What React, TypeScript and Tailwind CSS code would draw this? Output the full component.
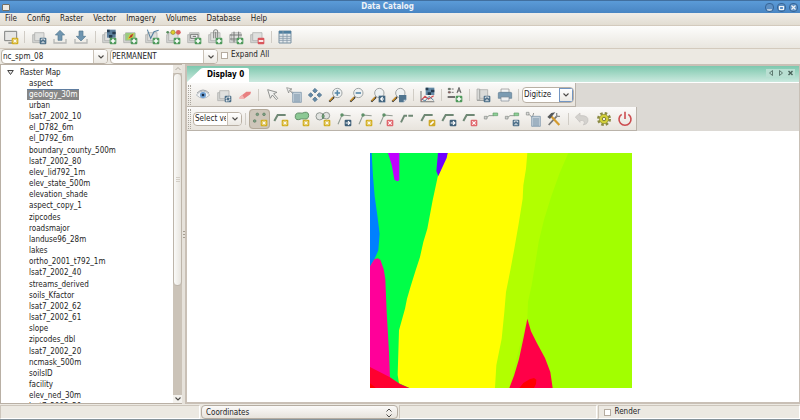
import { Fragment, type ReactNode } from "react";

const menus = ["File", "Config", "Raster", "Vector", "Imagery", "Volumes", "Database", "Help"];

const maps = [
  "aspect",
  "geology_30m",
  "urban",
  "lsat7_2002_10",
  "el_D782_6m",
  "el_D792_6m",
  "boundary_county_500m",
  "lsat7_2002_80",
  "elev_lid792_1m",
  "elev_state_500m",
  "elevation_shade",
  "aspect_copy_1",
  "zipcodes",
  "roadsmajor",
  "landuse96_28m",
  "lakes",
  "ortho_2001_t792_1m",
  "lsat7_2002_40",
  "streams_derived",
  "soils_Kfactor",
  "lsat7_2002_62",
  "lsat7_2002_61",
  "slope",
  "zipcodes_dbl",
  "lsat7_2002_20",
  "ncmask_500m",
  "soilsID",
  "facility",
  "elev_ned_30m",
  "lsat7_2002_50",
];

type Tool = { name: string; icon: ReactNode; active?: boolean };

const badgeColors = {
  plus: "#4f9a5c",
  star: "#d2ae1e",
  arrow: "#3f6079",
  save: "#4d6f88",
  refresh: "#4d6f88",
  cross: "#e0666c",
  minus: "#d9565c",
  pencil: "#cfa928",
};

function Badge({ kind }: { kind: keyof typeof badgeColors }) {
  return (
    <g transform="translate(13 13)">
      <rect width="10" height="10" rx="1.5" fill={badgeColors[kind]} />
      <g stroke="#fff" strokeWidth="1.8" fill="none">
        {kind === "plus" && <path d="M5 1.5v7M1.5 5h7" strokeWidth="2.4" />}
        {kind === "minus" && <path d="M1.5 5h7" strokeWidth="2.6" />}
        {kind === "star" && <path d="M5 1.5v7M1.5 5h7M2.6 2.6l4.8 4.8M7.4 2.6L2.6 7.4" strokeWidth="1.2" />}
        {kind === "arrow" && <path d="M1.5 5h6M5 2.2L7.8 5 5 7.8" />}
        {kind === "cross" && <path d="M2.5 2.5l5 5M7.5 2.5l-5 5" />}
        {kind === "pencil" && <path d="M2.5 7.5l5-5" strokeWidth="2.4" />}
        {kind === "save" && <path d="M2.5 4V2h5v2M3.5 8.5V6.5h3v2" strokeWidth="1.2" />}
        {kind === "refresh" && <path d="M2 5a3 3 0 0 1 5.5-1.5M8 5a3 3 0 0 1-5.5 1.5M7.5 1v3M2.5 9V6" strokeWidth="1.3" />}
      </g>
    </g>
  );
}

function Icon({ children }: { children: ReactNode }) {
  return (
    <svg viewBox="0 0 24 24" className="size-4 shrink-0" aria-hidden="true">
      {children}
    </svg>
  );
}

const layers = (
  <g fill="#d4d5d3" stroke="#a6a8a6">
    <path d="M2.5 8.5h13v12h-13z" />
    <path d="M5.5 5.5h14v12h-14z" fill="#dfe0de" />
  </g>
);

const lens = (
  <g>
    <path d="M2 22l7-7" stroke="#2e2e2e" strokeWidth="3" />
    <path d="M2.5 20.5l5-5" stroke="#d99a2b" strokeWidth="2" />
    <circle cx="14" cy="9" r="7" fill="#eef1f2" stroke="#9a9e9e" strokeWidth="1.4" />
  </g>
);

const elbow = <path d="M2 15l5-9h12" fill="none" stroke="#6f8875" strokeWidth="3" />;

const vertex = (
  <g>
    <path d="M3 20L9 6l13 1" fill="none" stroke="#909a92" strokeWidth="1.6" />
    <circle cx="9" cy="6" r="2.6" fill="#5e9068" />
  </g>
);

const table = (
  <g>
    <path d="M10 8h13v15H10z" fill="#c3d0da" stroke="#6f8ba1" />
    <path d="M12 12h9M12 15h9M12 18h9M12 21h9" stroke="#6f8ba1" strokeWidth="1.3" />
  </g>
);

const catalogTools: Tool[][] = [
  [
    {
      name: "New display",
      icon: (
        <>
          <path d="M2.5 3.5h18v14h-18z" fill="#e6e6e4" stroke="#7f817f" strokeWidth="1.5" />
          <path d="M8 21h6" stroke="#7f817f" strokeWidth="2" />
          <Badge kind="star" />
        </>
      ),
    },
  ],
  [
    { name: "Save workspace", icon: <>{layers}<Badge kind="save" /></> },
    {
      name: "Import",
      icon: (
        <>
          <path d="M3 15v6h18v-6" fill="none" stroke="#b5b7b5" strokeWidth="2" />
          <path d="M12 2l7 7h-4v8H9V9H5z" fill="#6f95b0" stroke="#54788f" />
        </>
      ),
    },
    {
      name: "Export",
      icon: (
        <>
          <path d="M3 15v6h18v-6" fill="none" stroke="#b5b7b5" strokeWidth="2" />
          <path d="M12 18l7-7h-4V3H9v8H5z" fill="#6f95b0" stroke="#54788f" />
        </>
      ),
    },
  ],
  [
    {
      name: "Add raster",
      icon: (
        <>
          {layers}
          <path d="M9 1h13v12H9z" fill="#5b7f9c" />
          <path d="M9 1h4v4H9zM17 4h5v4h-5zM12 9h5v4h-5z" fill="#263c50" />
          <Badge kind="plus" />
        </>
      ),
    },
    {
      name: "Add raster group",
      icon: (
        <>
          {layers}
          <path d="M5 6h15v11H5z" fill="#9acb80" />
          <path d="M8 16l3-7 7-3-2 7z" fill="#d9d03d" />
          <path d="M10 14l3-5 4-2-2 5z" fill="#b5372d" />
          <Badge kind="plus" />
        </>
      ),
    },
    {
      name: "Add vector",
      icon: (
        <>
          {layers}
          <path d="M5 1l5 13 5-10 7-2" fill="none" stroke="#56809f" strokeWidth="1.6" />
          <Badge kind="plus" />
        </>
      ),
    },
    {
      name: "Add thematic vector",
      icon: (
        <>
          {layers}
          <circle cx="4" cy="5" r="2" fill="#568b5c" />
          <circle cx="12" cy="5" r="3.2" fill="#dfd02a" stroke="#8b8030" />
          <circle cx="20" cy="5" r="3.6" fill="#d9605f" />
          <Badge kind="plus" />
        </>
      ),
    },
    {
      name: "Add label",
      icon: (
        <>
          {layers}
          <path d="M7 8h11v6H7z" fill="#eee" stroke="#707270" strokeWidth="1.4" />
          <path d="M10 11h5" stroke="#606260" strokeWidth="1.4" />
          <Badge kind="plus" />
        </>
      ),
    },
    {
      name: "Add overlay",
      icon: (
        <>
          {layers}
          <path d="M10 14V4a3 3 0 0 1 6 0v9M13 4v10" fill="none" stroke="#858785" strokeWidth="1.6" />
          <Badge kind="plus" />
        </>
      ),
    },
    {
      name: "Add grid",
      icon: (
        <>
          {layers}
          <path d="M9 4v16M16 4v16M3 9h18M3 15h18" stroke="#777977" strokeWidth="1.5" />
          <Badge kind="plus" />
        </>
      ),
    },
    { name: "Remove layer", icon: <>{layers}<Badge kind="minus" /></> },
  ],
  [
    {
      name: "Attribute table",
      icon: (
        <>
          <path d="M3 3h18v18H3z" fill="#e4e9ec" stroke="#7890a1" strokeWidth="1.5" />
          <path d="M3 3h18v4H3z" fill="#4f7f9f" />
          <path d="M3 11h18M3 14h18M3 17h18M9 3v18M15 7v14" stroke="#8a9dab" strokeWidth="1.3" />
        </>
      ),
    },
  ],
];

const displayTools: Tool[][] = [
  [
    {
      name: "Display map",
      icon: (
        <>
          <path d="M2 12q10-12 20 0-10 10-20 0z" fill="#f1f3f5" stroke="#b2b8bd" strokeWidth="1.4" />
          <path d="M3 9q9-9 18 0" fill="none" stroke="#9a9fa4" strokeWidth="1.4" />
          <circle cx="12" cy="12" r="4.6" fill="#6c9fd4" />
          <circle cx="12" cy="12" r="2" fill="#1c2c44" />
        </>
      ),
    },
    { name: "Render map", icon: <>{layers}<Badge kind="refresh" /></> },
    {
      name: "Erase display",
      icon: (
        <>
          <path d="M4 15l10-8 7 0-1 4-10 7H4z" fill="#e87f80" />
          <path d="M4 15l4-3 3 5-1 1H4z" fill="#f2b5b3" />
        </>
      ),
    },
  ],
  [
    { name: "Pointer", icon: <path d="M4 4l14 4-5 2 6 7-2 2-6-7-3 5z" fill="#f0f0ee" stroke="#8a8c8a" strokeWidth="1.4" /> },
    {
      name: "Query",
      icon: (
        <>
          <path d="M1 1l8 2-3 1 6 6-1 1-6-6-1 4z" fill="#eee" stroke="#808280" />
          {table}
        </>
      ),
    },
    {
      name: "Pan",
      icon: (
        <g fill="#6288a6" stroke="#4a6e8a">
          <path d="M12 2l3.500 3.500L12 9 8.500 5.500z" />
          <path d="M12 15l3.500 3.500L12 22l-3.500-3.500z" />
          <path d="M5.500 8.500L9 12l-3.500 3.500L2 12z" />
          <path d="M18.500 8.500L22 12l-3.500 3.500L15 12z" />
        </g>
      ),
    },
    { name: "Zoom in", icon: <>{lens}<path d="M14 5v8M10 9h8" stroke="#5587a8" strokeWidth="2.4" /></> },
    { name: "Zoom out", icon: <>{lens}<path d="M10 9h8" stroke="#5587a8" strokeWidth="2.4" /></> },
    {
      name: "Zoom to map",
      icon: (
        <>
          {lens}
          <path d="M13 13h10v10H13z" fill="#426681" />
          <path d="M19 15l-3 3 3 3M16 18h5" stroke="#fff" strokeWidth="1.6" fill="none" />
        </>
      ),
    },
    {
      name: "Zoom to region",
      icon: (
        <>
          {lens}
          <path d="M12 12h11v7l-4 4h-7z" fill="#4f748f" />
          <path d="M23 19l-4 4v-4z" fill="#c3d0da" />
        </>
      ),
    },
  ],
  [
    {
      name: "Analyze map",
      icon: (
        <>
          <path d="M10 1h13v11H10z" fill="#6389a5" />
          <path d="M10 1h4v4h-4zM18 4h5v4h-5zM13 8h5v4h-5z" fill="#263c50" />
          <path d="M3 6v16h20" fill="none" stroke="#777" strokeWidth="1.6" />
          <path d="M3 20l6-6 5 4 8-5" fill="none" stroke="#cf4c52" strokeWidth="1.8" />
          <path d="M4 18l5 3 6-7 7 6" fill="none" stroke="#507fa3" strokeWidth="1.4" />
        </>
      ),
    },
  ],
  [
    {
      name: "Add map elements",
      icon: (
        <>
          <path d="M2 2h3v2H2z" fill="#568b5c" stroke="#555" />
          <path d="M2 7h3v2H2z" fill="#c9655f" stroke="#555" />
          <path d="M7 3h3M7 8h3" stroke="#777" strokeWidth="1.5" />
          <path d="M15 9l3-8 3 8M16 6h4" stroke="#666" strokeWidth="1.6" fill="none" />
          <path d="M1 15h11" stroke="#444" strokeWidth="2.2" />
          <Badge kind="plus" />
        </>
      ),
    },
  ],
  [
    {
      name: "Save display",
      icon: (
        <>
          <path d="M3 3h4v17H3zM7 4h12v13H7z" fill="#dadbd9" stroke="#a0a2a0" />
          <path d="M3 20h12" stroke="#a0a2a0" strokeWidth="2" />
          <Badge kind="save" />
        </>
      ),
    },
    {
      name: "Print",
      icon: (
        <>
          <path d="M6 3h12v6H6z" fill="#f4f4f4" stroke="#8b8d8b" />
          <path d="M2 9q0-1 2-1h16q2 0 2 1v8H2z" fill="#7b9bb2" stroke="#5f7c92" />
          <path d="M6 15h12v6H6z" fill="#f1f1f1" stroke="#7b8a95" />
        </>
      ),
    },
  ],
];

const digitTools: Tool[][] = [
  [
    {
      name: "Digitize point",
      active: true,
      icon: (
        <>
          <g fill="#7ea083" stroke="#5c7d62">
            <circle cx="8" cy="5" r="2" />
            <circle cx="18" cy="5" r="2" />
            <circle cx="4" cy="15" r="2" />
          </g>
          <Badge kind="star" />
        </>
      ),
    },
    { name: "Digitize line", icon: <>{elbow}<Badge kind="star" /></> },
    {
      name: "Digitize area",
      icon: (
        <>
          <path d="M2 10q-1-8 7-7 3 1 7-1 6-1 6 5-1 6-6 5-5-1-9 1-4 1-5-3z" fill="#8cc894" stroke="#5d8a63" strokeWidth="1.4" />
          <Badge kind="star" />
        </>
      ),
    },
    {
      name: "Digitize boundary",
      icon: (
        <>
          <circle cx="7" cy="8" r="5.500" fill="#e0e2df" stroke="#8c928d" strokeWidth="1.4" />
          <circle cx="17" cy="7" r="5" fill="#e0e2df" stroke="#8c928d" strokeWidth="1.4" />
          <path d="M12 4q4 3 0 8-3-4 0-8z" fill="#70ad78" stroke="#55705a" />
          <Badge kind="star" />
        </>
      ),
    },
    { name: "Move vertex", icon: <>{vertex}<Badge kind="arrow" /></> },
    { name: "Add vertex", icon: <>{vertex}<Badge kind="star" /></> },
    { name: "Remove vertex", icon: <>{vertex}<Badge kind="cross" /></> },
    { name: "Split line", icon: <path d="M3 17l5-10h4M14 7h7" fill="none" stroke="#6f8875" strokeWidth="3" /> },
    { name: "Edit line", icon: <>{elbow}<Badge kind="pencil" /></> },
    { name: "Move feature", icon: <>{elbow}<Badge kind="arrow" /></> },
    { name: "Delete feature", icon: <>{elbow}<Badge kind="cross" /></> },
    {
      name: "Display categories",
      icon: (
        <>
          <path d="M4 11l5-4h7" fill="none" stroke="#929c94" strokeWidth="1.5" />
          <path d="M2 8h4v4H2z" fill="#d0d3d0" stroke="#858985" />
          <path d="M15 3h7v4h-7z" fill="#8fd097" stroke="#5f9c68" />
        </>
      ),
    },
    {
      name: "Copy categories",
      icon: (
        <>
          <path d="M4 11l5-4h7" fill="none" stroke="#929c94" strokeWidth="1.5" />
          <path d="M2 8h4v4H2z" fill="#d0d3d0" stroke="#858985" />
          <path d="M15 3h7v4h-7z" fill="#8fd097" stroke="#5f9c68" />
          <Badge kind="save" />
        </>
      ),
    },
    {
      name: "Display attributes",
      icon: (
        <>
          <path d="M2 2h4v4H2z" fill="#ddd" stroke="#858985" />
          <path d="M6 5l5 5 2-7" stroke="#858985" strokeWidth="1.3" fill="none" />
          {table}
        </>
      ),
    },
    {
      name: "Additional tools",
      icon: (
        <>
          <path d="M4 21L17 7" stroke="#777" strokeWidth="2.6" />
          <path d="M7 7l13 14" stroke="#d49b2e" strokeWidth="3.2" />
          <path d="M2 9l6-6 6-1-5 6-3 4z" fill="#55585a" />
          <path d="M16 3v5h5" stroke="#8b8d8b" strokeWidth="2" fill="none" />
        </>
      ),
    },
  ],
  [
    {
      name: "Undo",
      icon: <path d="M2 9l7-6v4q13-1 12 8-1 5-7 6 5-7-5-7v3z" fill="#d4d2ce" stroke="#c2c0bc" />,
    },
    {
      name: "Settings",
      icon: (
        <>
          <circle cx="12" cy="12" r="8.500" fill="none" stroke="#8a8a45" strokeWidth="4" strokeDasharray="3.700 2.980" />
          <circle cx="12" cy="12" r="7" fill="#d3d03a" stroke="#858432" />
          <circle cx="12" cy="12" r="2.600" fill="#f1efe9" stroke="#77772d" strokeWidth="1.4" />
        </>
      ),
    },
    {
      name: "Quit digitizer",
      icon: (
        <>
          <path d="M7 5a9 9 0 1 0 10 0" fill="none" stroke="#cc4d50" strokeWidth="2.400" />
          <path d="M12 1v11" stroke="#cc4d50" strokeWidth="2.400" />
        </>
      ),
    },
  ],
];

function Separator() {
  return <span className="h-3 w-px mx-[3px] shrink-0 bg-[#d0ccc5]" />;
}

function Tools({ groups }: { groups: Tool[][] }) {
  return (
    <>
      {groups.map((group, index) => (
        <Fragment key={index}>
          {index > 0 && <Separator />}
          {group.map((tool) => (
            <button
              key={tool.name}
              type="button"
              aria-label={tool.name}
              className={`flex h-5 min-w-0 flex-1 items-center justify-center rounded-sm ${
                tool.active ? "bg-[#cec6ba] outline outline-[#b3a999] -outline-offset-1" : ""
              }`}
            >
              <Icon>{tool.icon}</Icon>
            </button>
          ))}
        </Fragment>
      ))}
    </>
  );
}

function Grip() {
  return <span className="ml-px h-5 w-[3px] shrink-0 border-x border-dotted border-[#aaa59c]" />;
}

function Chevron() {
  return (
    <svg viewBox="0 0 8 8" className="size-2" aria-hidden="true">
      <path d="M1.500 2.500L4 5l2.500-2.500" fill="none" stroke="#4c4a47" strokeWidth="1.100" />
    </svg>
  );
}

function Combo({ label, value, className, focused }: { label: string; value: string; className: string; focused?: boolean }) {
  return (
    <div className={`flex overflow-hidden rounded-sm border border-[#b9b0a4] bg-white ${className}`}>
      <input aria-label={label} defaultValue={value} className="min-w-0 flex-1 px-px outline-none" />
      <button
        type="button"
        aria-label={`Open ${label}`}
        className={`flex w-3.5 items-center justify-center bg-linear-to-b from-white to-[#ece9e3] ${
          focused ? "border border-[#7295c2]" : "border-l border-[#c9c1b6]"
        }`}
      >
        <Chevron />
      </button>
    </div>
  );
}

function GeologyMap() {
  return (
    <svg viewBox="0 0 786 705" className="w-[262px] shrink-0" role="img" aria-label="geology_30m">
      <g transform="translate(-30 -23)">
        <path d="M30 23h786v705H30z" fill="#a2ff00" />
        <path d="M502 23h123l-26 60-25 70-22 70-16 67-11 70-10 60-11 50-2 50-25 90-29 118h-60z" fill="#b2ff00" />
        <path d="M30 23h240L170 728H30z" fill="#00ff48" />
        <path d="M263 23h239l-4 47-8 50-2 40-12 75-13 75-12 65-13 65-5 60-8 80-16 80-4 68H148l-31-14-4-25 4-134 18-65 6-30 11-37 15-48 13-40 10-45 12-40 16-85 15-70z" fill="#ffff00" />
        <path d="M30 23h5l4 70 5 60 8 57 7 55-4 50-10 23-15 25z" fill="#0080ff" />
        <path d="M30 363l13-21 10-3 8 4 10 28 5 30 4 99 7 120 3 80H30z" fill="#ff0099" />
        <path d="M30 665l60 31 30 20 28 12H30z" fill="#ff0030" />
        <path d="M30 714l18 14H30z" fill="#ff0000" />
        <path d="M84 23h34v82l-6 3-9-5-4-23-4-22z" fill="#c000ff" />
        <path d="M234 23h29l-3 15-15 32-10 22-6-14z" fill="#7000ff" />
        <path d="M502 520l11 38 18 36 24 44 16 42 7 48H448l14-37 15-50 14-65z" fill="#ff0048" />
        <path d="M478 728l12-15 19-11 13-4 7 5-1 13-6 12z" fill="#ff0000" />
      </g>
    </svg>
  );
}

export default function App() {
  return (
    <div className="flex h-screen flex-col overflow-hidden border-b border-[#84929a] bg-[#ece9e2] font-['DejaVu_Sans_Condensed','DejaVu_Sans',sans-serif] text-[8px] leading-none text-[#242424]">
      <header className="flex h-[13px] shrink-0 items-center border-t border-[#416f9f] bg-linear-to-b from-[#5b9bd8] to-[#4885c3] px-0.5 text-[#eef3f8]">
        <span className="h-[7px] w-2 rounded-[1px] border border-[#756f61] bg-[#eeeae2]" />
        <h1 className="flex-1 text-center font-bold">Data Catalog</h1>
        <div className="flex gap-[3px]">
          {["M2 7h5", "M2.500 3.500h4v3h-4z", "M2.500 2.500l4 4M6.500 2.500l-4 4"].map((d, index) => (
            <button
              key={d}
              type="button"
              aria-label={["Minimize", "Maximize", "Close"][index]}
              className="flex size-[9px] items-center justify-center rounded-sm bg-[#5c8fc4] outline outline-[#35669a] -outline-offset-1"
            >
              <svg viewBox="0 0 9 9" className="size-[9px]" aria-hidden="true">
                <path d={d} fill="none" stroke="#f2f4f6" strokeWidth="1.200" />
              </svg>
            </button>
          ))}
        </div>
      </header>

      <nav className="flex h-[13px] shrink-0 items-center gap-2.5 border-b border-[#d3cabd] bg-linear-to-b from-[#f0ede8] to-[#e2ddd2] px-[5px]">
        {menus.map((menu) => (
          <button key={menu} type="button">
            {menu}
          </button>
        ))}
      </nav>

      <div className="flex h-[23px] shrink-0 items-center border-b border-[#d3cabd] bg-linear-to-b from-[#fdfdfc] to-[#e9e6df]">
        <div className="flex w-[296px] items-center">
          <Tools groups={catalogTools} />
        </div>
      </div>

      <div className="flex h-[15px] shrink-0 items-stretch gap-[2px] px-px">
        <Combo label="Location" value="nc_spm_08" className="w-[107px]" />
        <Combo label="Mapset" value="PERMANENT" className="w-[108px]" />
        <label className="flex items-center gap-[3px] pb-[3px] pl-px">
          <input type="checkbox" className="size-[7px] appearance-none border border-[#b5aca0] bg-white" />
          Expand All
        </label>
      </div>

      <main className="flex min-h-0 flex-1">
        <aside className="flex w-[182px] shrink-0 border-y border-l border-[#b9b0a5] bg-white">
          <div className="min-w-0 flex-1 overflow-hidden">
            <div className="flex h-[13px] items-center gap-1.5 pt-0.5 pl-1.5">
              <svg viewBox="0 0 7 7" className="size-[7px]" aria-hidden="true">
                <path d="M.7 1.500h5.600L3.500 5.500z" fill="#e5e5e5" stroke="#444" />
              </svg>
              Raster Map
            </div>
            <ul className="grid h-[335px] auto-rows-fr pl-[26px]">
              {maps.map((map) => (
                <li key={map} className="flex">
                  <button
                    type="button"
                    className={`flex items-center px-[2px] ${
                      map === "geology_30m" ? "border-t border-[#5f7da0] bg-[#868686] text-white" : ""
                    }`}
                  >
                    {map}
                  </button>
                </li>
              ))}
            </ul>
          </div>
          <div className="flex w-[9px] flex-col bg-[#cbc3b8]">
            <span className="flex h-2 items-center justify-center bg-[#eae6df]">
              <svg viewBox="0 0 8 8" className="size-2" aria-hidden="true">
                <path d="M1.500 5L4 2.500 6.500 5" fill="none" stroke="#b0aaa0" />
              </svg>
            </span>
            <span className="flex h-[213px] flex-col items-center justify-center gap-px rounded border border-[#bdb5aa] bg-linear-to-r from-[#fafaf8] to-[#e8e5df]">
              <i className="h-px w-1 bg-[#d3cec6]" />
              <i className="h-px w-1 bg-[#d3cec6]" />
              <i className="h-px w-1 bg-[#d3cec6]" />
            </span>
            <span className="mt-auto flex h-2 items-center justify-center bg-[#f3f1ed]">
              <Chevron />
            </span>
          </div>
        </aside>

        <div className="flex w-[3px] shrink-0 flex-col items-center justify-center gap-0.5 bg-[#e6e2db]">
          <i className="h-px w-0.5 bg-[#a59d91]" />
          <i className="h-px w-0.5 bg-[#a59d91]" />
          <i className="h-px w-0.5 bg-[#a59d91]" />
        </div>

        <section className="flex min-w-0 flex-1 flex-col border-2 border-r-[1px] border-[#c9c0b6] bg-[#dcd9d4]">
          <div className="flex h-[17px] shrink-0 items-end border-b border-white bg-linear-to-b from-[#7cc8ae] to-[#cbe9df]">
            <div className="flex h-3.5">
              <svg viewBox="0 0 16 14" className="h-3.5 w-4" aria-hidden="true">
                <path d="M0 14L13 1.500Q14 0 16 0v14z" fill="#fff" />
              </svg>
              <button type="button" className="rounded-tr-[2px] bg-white pr-[5px] pl-1 font-bold text-black">
                Display 0
              </button>
            </div>
            <div className="mr-1 mb-[5px] ml-auto flex h-2 items-center gap-px bg-[#b9dfd2]">
              {["M6 1.500v5L3 4z", "M3 1.500v5L6 4z", "M2 2l4 4M6 2L2 6"].map((d, index) => (
                <button key={d} type="button" aria-label={["Previous tab", "Next tab", "Close tab"][index]}>
                  <svg viewBox="0 0 8 8" className="h-2 w-[9px]" aria-hidden="true">
                    <path d={d} fill="none" stroke="#476158" strokeWidth={index === 2 ? 1.4 : 0.8} />
                  </svg>
                </button>
              ))}
            </div>
          </div>

          <div className="flex h-6 w-[389px] shrink-0 items-center border-r border-b border-[#bab3aa] bg-linear-to-b from-[#fbfaf9] to-[#e8e4dd] pr-px">
            <Grip />
            <div className="ml-px flex min-w-0 flex-1 items-center">
              <Tools groups={displayTools} />
              <Separator />
            </div>
            <Combo label="Tool" value="Digitize" className="h-4 w-[52px]" focused />
          </div>
          <div className="flex h-6 w-[450px] shrink-0 items-center border-r border-b border-[#bab3aa] bg-linear-to-b from-[#fbfaf9] to-[#e8e4dd] pr-px">
            <Grip />
            <Combo label="Vector map" value="Select vector map" className="ml-[2px] h-3.5 w-[49px]" />
            <Separator />
            <div className="flex min-w-0 flex-1 items-center">
              <Tools groups={digitTools} />
            </div>
          </div>

          <div className="flex min-h-0 flex-1 justify-center overflow-hidden bg-white pt-[22px] pl-[15px]">
            <div>
              <GeologyMap />
            </div>
          </div>
        </section>
      </main>

      <footer className="flex h-[15px] shrink-0 items-stretch gap-px pt-px">
        <div className="w-[200px] shrink-0 border border-[#cdc6bc] border-r-white border-b-white" />
        <button
          type="button"
          className="flex w-[197px] shrink-0 items-center justify-between rounded-sm border border-[#b5ada2] bg-linear-to-b from-[#fbfaf9] to-[#e7e3dc] px-1 pt-px"
        >
          Coordinates
          <svg viewBox="0 0 8 10" className="h-2.5 w-2" aria-hidden="true">
            <path d="M1.500 3.500L4 1l2.500 2.500M1.500 6.500L4 9l2.500-2.500" fill="none" stroke="#4c4a47" strokeWidth="1" />
          </svg>
        </button>
        <div className="flex-1 border border-[#cdc6bc] border-r-white border-b-white" />
        <label className="flex flex-1 items-center gap-1 border border-[#cdc6bc] border-r-white border-b-white pl-[5px]">
          <input type="checkbox" className="size-[7px] appearance-none border border-[#b5aca0] bg-white" />
          Render
        </label>
      </footer>
    </div>
  );
}
